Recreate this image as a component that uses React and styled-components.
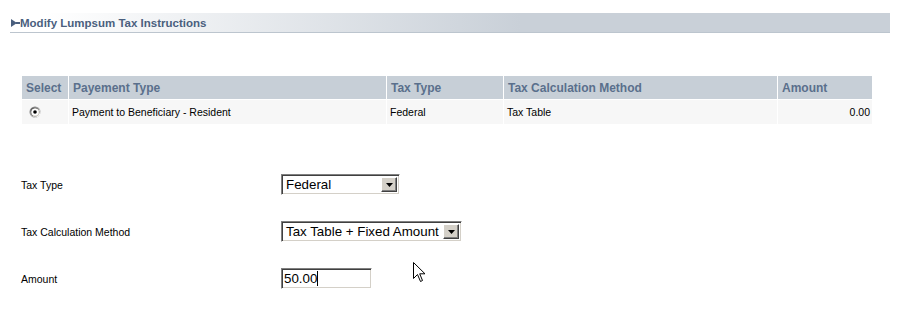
import React from 'react';
import styled, { createGlobalStyle } from 'styled-components';

const GlobalStyle = createGlobalStyle`
  html, body {
    margin: 0;
    padding: 0;
    background: #ffffff;
  }
  body {
    font-family: "Liberation Sans", Arial, sans-serif;
    color: #000;
  }
`;

const columns = [
  { key: 'select', title: 'Select', width: 46 },
  { key: 'type', title: 'Payement Type', width: 317 },
  { key: 'tax', title: 'Tax Type', width: 116 },
  { key: 'method', title: 'Tax Calculation Method', width: 273 },
  { key: 'amount', title: 'Amount', width: 94, right: true },
];

const rows = [
  {
    id: 1,
    type: 'Payment to Beneficiary - Resident',
    tax: 'Federal',
    method: 'Tax Table',
    amount: '0.00',
    checked: true,
  },
];

function App() {
  return (
    <Page>
      <GlobalStyle />
      <TitleBar>
        <TitleArrow width="9" height="8" viewBox="0 0 9 8">
          <path d="M0 0 L6 4 L0 8 Z" fill="#4a5f7e" />
          <rect x="5" y="3" width="4" height="2" fill="#4a5f7e" />
        </TitleArrow>
        Modify Lumpsum Tax Instructions
      </TitleBar>

      <Grid>
        {columns.map((c) => (
          <HeadCell key={c.key}>{c.title}</HeadCell>
        ))}
        {rows.map((r) => (
          <React.Fragment key={r.id}>
            <Cell center>
              <Radio checked={r.checked} />
            </Cell>
            <Cell>{r.type}</Cell>
            <Cell>{r.tax}</Cell>
            <Cell>{r.method}</Cell>
            <Cell right>{r.amount}</Cell>
          </React.Fragment>
        ))}
      </Grid>

      <Form>
        <FormRow>
          <Label>Tax Type</Label>
          <SelectBox width={119}>
            <SelectText>Federal</SelectText>
            <DropButton />
          </SelectBox>
        </FormRow>
        <FormRow>
          <Label>Tax Calculation Method</Label>
          <SelectBox width={181}>
            <SelectText>Tax Table + Fixed Amount</SelectText>
            <DropButton />
          </SelectBox>
        </FormRow>
        <FormRow>
          <Label>Amount</Label>
          <TextBox>
            50.00
            <Caret />
          </TextBox>
        </FormRow>
      </Form>

      <Pointer width="13" height="21" viewBox="0 0 13 21">
        <path
          d="M0.5 0.5 L0.5 16.5 L4.5 12.5 L7.5 19.5 L9.5 18.5 L6.7 11.8 L12 11.8 Z"
          fill="#fff"
          stroke="#000"
          strokeWidth="1"
          strokeLinejoin="miter"
        />
      </Pointer>
    </Page>
  );
}

function Radio({ checked }) {
  return (
    <svg width="12" height="12" viewBox="0 0 12 12">
      <circle cx="6" cy="6" r="5.5" fill="#808080" />
      <circle cx="6.5" cy="6.5" r="5" fill="#ffffff" />
      <circle cx="6" cy="6" r="4.5" fill="#404040" />
      <circle cx="6.4" cy="6.4" r="4" fill="#d4d0c8" />
      <circle cx="6" cy="6" r="3.6" fill="#ffffff" />
      {checked && <circle cx="6" cy="6" r="1.8" fill="#000" />}
    </svg>
  );
}

function DropButton() {
  return (
    <ArrowButton>
      <svg width="7" height="4" viewBox="0 0 7 4">
        <path d="M0 0 H7 L3.5 4 Z" fill="#000" />
      </svg>
    </ArrowButton>
  );
}

export default App;

const Page = styled.div`
  position: relative;
  width: 900px;
  height: 309px;
  padding: 13px 10px 0 10px;
  box-sizing: border-box;
  overflow: hidden;
`;

const TitleBar = styled.div`
  height: 19px;
  display: flex;
  align-items: center;
  padding-left: 1px;
  background: linear-gradient(to right, #ffffff 4%, #c9d0d8 58%, #c9d0d8 100%);
  border-bottom: 1px solid #bcc5ce;
  font-size: 11.5px;
  font-weight: bold;
  color: #4a5f7e;
`;

const TitleArrow = styled.svg`
  flex: none;
`;

const Grid = styled.div`
  display: grid;
  grid-template-columns: ${columns.map((c) => `${c.width}px`).join(' ')};
  grid-template-rows: 23px 24px;
  gap: 1px;
  margin: 43px 0 0 12px;
  width: max-content;
`;

const HeadCell = styled.div`
  background: #c7cfd7;
  color: #5a6f8c;
  font-size: 12px;
  font-weight: bold;
  display: flex;
  align-items: center;
  padding-left: 4px;
`;

const Cell = styled.div`
  background: #f7f7f7;
  font-size: 10.5px;
  color: #000;
  display: flex;
  align-items: center;
  justify-content: ${(p) => (p.right ? 'flex-end' : 'flex-start')};
  padding: ${(p) => (p.right ? '0 2px 0 0' : p.center ? '0 0 0 7px' : '0 0 0 3px')};
`;

const Form = styled.div`
  margin-top: 37px;
  padding-left: 11px;
  display: flex;
  flex-direction: column;
`;

const FormRow = styled.div`
  display: flex;
  align-items: center;
  height: 47px;
`;

const Label = styled.div`
  width: 260px;
  font-size: 10.5px;
`;

const SelectBox = styled.div`
  width: ${(p) => p.width}px;
  height: 21px;
  box-sizing: border-box;
  display: flex;
  align-items: center;
  justify-content: space-between;
  background: #fff;
  border: 1px solid;
  border-color: #808080 #ffffff #ffffff #808080;
  box-shadow: inset 1px 1px 0 #404040, inset -1px -1px 0 #d4d0c8;
  padding: 2px;
`;

const SelectText = styled.span`
  font-size: 13.33px;
  padding-left: 2px;
  white-space: nowrap;
`;

const ArrowButton = styled.div`
  width: 16px;
  height: 15px;
  box-sizing: border-box;
  background: #d4d0c8;
  border: 1px solid;
  border-color: #ffffff #404040 #404040 #ffffff;
  box-shadow: inset -1px -1px 0 #808080;
  display: flex;
  align-items: center;
  justify-content: center;
  flex: none;
`;

const TextBox = styled.div`
  width: 91px;
  height: 21px;
  box-sizing: border-box;
  display: flex;
  align-items: center;
  background: #fff;
  border: 1px solid;
  border-color: #808080 #ffffff #ffffff #808080;
  box-shadow: inset 1px 1px 0 #404040, inset -1px -1px 0 #d4d0c8;
  padding-left: 2px;
  font-size: 13.33px;
`;

const Caret = styled.span`
  display: inline-block;
  width: 1px;
  height: 15px;
  background: #000;
`;

const Pointer = styled.svg`
  position: absolute;
  left: 413px;
  top: 262px;
`;
